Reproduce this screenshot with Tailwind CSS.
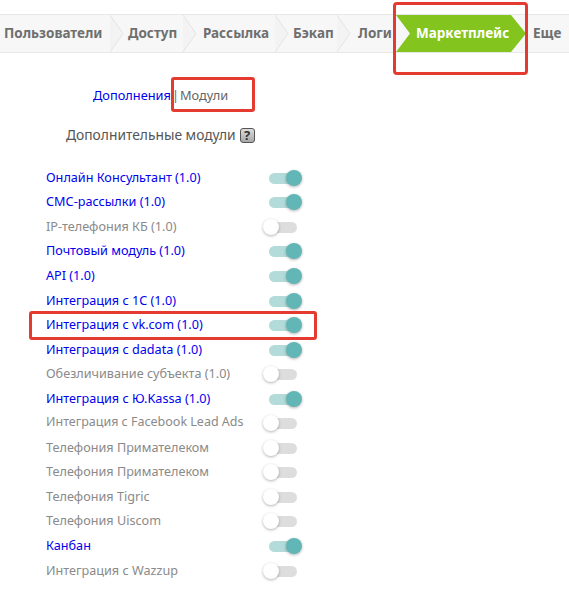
<!DOCTYPE html>
<html lang="ru"><head><meta charset="utf-8">
<script src="https://cdn.jsdelivr.net/npm/@tailwindcss/browser@4"></script>
</head>
<body class="bg-white">
<div class="relative w-[569px] h-[594px] overflow-hidden bg-white font-['Noto_Sans',sans-serif]">
  <div class="h-[14px]"></div>
  <nav class="h-[39px] bg-[#f7f7f7] border-y border-[#e8e8e8] flex items-center text-[13.5px] font-bold text-[#6f6f6f] whitespace-nowrap">
    <span class="ml-[4px] w-[106px]">Пользователи</span>
    <svg class="w-[14px] h-[37px] shrink-0" viewBox="0 0 14 37"><path d="M0 0L13 18.5L0 37" fill="#f3f3f3" stroke="#e4e4e4"/></svg>
    <span class="ml-[4px] w-[55px]">Доступ</span>
    <svg class="w-[14px] h-[37px] shrink-0" viewBox="0 0 14 37"><path d="M0 0L13 18.5L0 37" fill="#f3f3f3" stroke="#e4e4e4"/></svg>
    <span class="ml-[6px] w-[72px]">Рассылка</span>
    <svg class="w-[14px] h-[37px] shrink-0" viewBox="0 0 14 37"><path d="M0 0L13 18.5L0 37" fill="#f3f3f3" stroke="#e4e4e4"/></svg>
    <span class="ml-[4px] w-[44px]">Бэкап</span>
    <svg class="w-[14px] h-[37px] shrink-0" viewBox="0 0 14 37"><path d="M0 0L13 18.5L0 37" fill="#f3f3f3" stroke="#e4e4e4"/></svg>
    <span class="ml-[7px] w-[38px]">Логи</span>
    <div class="relative w-[131px] h-[37px] shrink-0">
      <svg class="absolute inset-0" width="131" height="37" viewBox="0 0 131 37"><path d="M0 0H115L130 18.5L115 37H0L14 18.5Z" fill="#84c41e"/></svg>
      <span class="absolute left-[20px] top-[8px] text-white text-[13.5px] leading-[20px]">Маркетплейс</span>
    </div>
    <span class="ml-[6px]">Еще</span>
  </nav>

  <div class="pl-[93px] pt-[33px] text-[12.8px] leading-[18px] text-[#666] flex"><a class="text-[#0000ee]">Дополнения</a><span class="ml-[1px]">|</span><span class="ml-[1px]">Модули</span></div>
  <div class="pl-[66px] mt-[22px] flex items-center gap-[4px] text-[13.8px] leading-[18px] text-[#555]">Дополнительные модули
    <span class="w-[15px] h-[15px] rounded-[3px] bg-gradient-to-b from-[#dddddd] to-[#a8a8a8] border border-[#555] flex items-center justify-center text-[13px] font-bold text-[#333] leading-none">?</span>
  </div>

  <ul class="absolute left-[46px] top-[165px] w-[260px] text-[12.65px] text-[#0000ee]">
    <li class="h-[24.56px] flex items-center justify-between">Онлайн Консультант (1.0)<span class="relative top-[1px] block w-[28px] h-[11px] mr-[9px] rounded-full bg-[#b2dbd9]"><i class="absolute -top-[3px] left-[17px] w-[16px] h-[16px] rounded-full bg-[#62b7b6] shadow-[0_1px_3px_rgba(0,0,0,.3)]"></i></span></li>
    <li class="h-[24.56px] flex items-center justify-between">СМС-рассылки (1.0)<span class="relative top-[1px] block w-[28px] h-[11px] mr-[9px] rounded-full bg-[#b2dbd9]"><i class="absolute -top-[3px] left-[17px] w-[16px] h-[16px] rounded-full bg-[#62b7b6] shadow-[0_1px_3px_rgba(0,0,0,.3)]"></i></span></li>
    <li class="h-[24.56px] flex items-center justify-between text-[#8a8a8a]">IP-телефония КБ (1.0)<span class="relative top-[1px] block w-[28px] h-[11px] mr-[9px] rounded-full bg-[#dddddd]"><i class="absolute -top-[3px] -left-[6px] w-[16px] h-[16px] rounded-full bg-white shadow-[0_1px_3px_rgba(0,0,0,.3)]"></i></span></li>
    <li class="h-[24.56px] flex items-center justify-between">Почтовый модуль (1.0)<span class="relative top-[1px] block w-[28px] h-[11px] mr-[9px] rounded-full bg-[#b2dbd9]"><i class="absolute -top-[3px] left-[17px] w-[16px] h-[16px] rounded-full bg-[#62b7b6] shadow-[0_1px_3px_rgba(0,0,0,.3)]"></i></span></li>
    <li class="h-[24.56px] flex items-center justify-between">API (1.0)<span class="relative top-[1px] block w-[28px] h-[11px] mr-[9px] rounded-full bg-[#b2dbd9]"><i class="absolute -top-[3px] left-[17px] w-[16px] h-[16px] rounded-full bg-[#62b7b6] shadow-[0_1px_3px_rgba(0,0,0,.3)]"></i></span></li>
    <li class="h-[24.56px] flex items-center justify-between">Интеграция с 1С (1.0)<span class="relative top-[1px] block w-[28px] h-[11px] mr-[9px] rounded-full bg-[#b2dbd9]"><i class="absolute -top-[3px] left-[17px] w-[16px] h-[16px] rounded-full bg-[#62b7b6] shadow-[0_1px_3px_rgba(0,0,0,.3)]"></i></span></li>
    <li class="h-[24.56px] flex items-center justify-between">Интеграция с vk.com (1.0)<span class="relative top-[1px] block w-[28px] h-[11px] mr-[9px] rounded-full bg-[#b2dbd9]"><i class="absolute -top-[3px] left-[17px] w-[16px] h-[16px] rounded-full bg-[#62b7b6] shadow-[0_1px_3px_rgba(0,0,0,.3)]"></i></span></li>
    <li class="h-[24.56px] flex items-center justify-between">Интеграция с dadata (1.0)<span class="relative top-[1px] block w-[28px] h-[11px] mr-[9px] rounded-full bg-[#b2dbd9]"><i class="absolute -top-[3px] left-[17px] w-[16px] h-[16px] rounded-full bg-[#62b7b6] shadow-[0_1px_3px_rgba(0,0,0,.3)]"></i></span></li>
    <li class="h-[24.56px] flex items-center justify-between text-[#8a8a8a]">Обезличивание субъекта (1.0)<span class="relative top-[1px] block w-[28px] h-[11px] mr-[9px] rounded-full bg-[#dddddd]"><i class="absolute -top-[3px] -left-[6px] w-[16px] h-[16px] rounded-full bg-white shadow-[0_1px_3px_rgba(0,0,0,.3)]"></i></span></li>
    <li class="h-[24.56px] flex items-center justify-between">Интеграция с Ю.Kassa (1.0)<span class="relative top-[1px] block w-[28px] h-[11px] mr-[9px] rounded-full bg-[#b2dbd9]"><i class="absolute -top-[3px] left-[17px] w-[16px] h-[16px] rounded-full bg-[#62b7b6] shadow-[0_1px_3px_rgba(0,0,0,.3)]"></i></span></li>
    <li class="h-[24.56px] flex items-center justify-between text-[#8a8a8a]"><span class="text-[12.5px]">Интеграция с Facebook Lead Ads</span><span class="relative top-[1px] block w-[28px] h-[11px] mr-[9px] rounded-full bg-[#dddddd]"><i class="absolute -top-[3px] -left-[6px] w-[16px] h-[16px] rounded-full bg-white shadow-[0_1px_3px_rgba(0,0,0,.3)]"></i></span></li>
    <li class="h-[24.56px] flex items-center justify-between text-[#8a8a8a]">Телефония Примателеком<span class="relative top-[1px] block w-[28px] h-[11px] mr-[9px] rounded-full bg-[#dddddd]"><i class="absolute -top-[3px] -left-[6px] w-[16px] h-[16px] rounded-full bg-white shadow-[0_1px_3px_rgba(0,0,0,.3)]"></i></span></li>
    <li class="h-[24.56px] flex items-center justify-between text-[#8a8a8a]">Телефония Примателеком<span class="relative top-[1px] block w-[28px] h-[11px] mr-[9px] rounded-full bg-[#dddddd]"><i class="absolute -top-[3px] -left-[6px] w-[16px] h-[16px] rounded-full bg-white shadow-[0_1px_3px_rgba(0,0,0,.3)]"></i></span></li>
    <li class="h-[24.56px] flex items-center justify-between text-[#8a8a8a]">Телефония Tigric<span class="relative top-[1px] block w-[28px] h-[11px] mr-[9px] rounded-full bg-[#dddddd]"><i class="absolute -top-[3px] -left-[6px] w-[16px] h-[16px] rounded-full bg-white shadow-[0_1px_3px_rgba(0,0,0,.3)]"></i></span></li>
    <li class="h-[24.56px] flex items-center justify-between text-[#8a8a8a]">Телефония Uiscom<span class="relative top-[1px] block w-[28px] h-[11px] mr-[9px] rounded-full bg-[#dddddd]"><i class="absolute -top-[3px] -left-[6px] w-[16px] h-[16px] rounded-full bg-white shadow-[0_1px_3px_rgba(0,0,0,.3)]"></i></span></li>
    <li class="h-[24.56px] flex items-center justify-between">Канбан<span class="relative top-[1px] block w-[28px] h-[11px] mr-[9px] rounded-full bg-[#b2dbd9]"><i class="absolute -top-[3px] left-[17px] w-[16px] h-[16px] rounded-full bg-[#62b7b6] shadow-[0_1px_3px_rgba(0,0,0,.3)]"></i></span></li>
    <li class="h-[24.56px] flex items-center justify-between text-[#8a8a8a]">Интеграция с Wazzup<span class="relative top-[1px] block w-[28px] h-[11px] mr-[9px] rounded-full bg-[#dddddd]"><i class="absolute -top-[3px] -left-[6px] w-[16px] h-[16px] rounded-full bg-white shadow-[0_1px_3px_rgba(0,0,0,.3)]"></i></span></li>
  </ul>

  <div class="absolute left-[393px] top-[2px] w-[135px] h-[73px] border-[3px] border-[#e53a2f] rounded-[4px]"></div>
  <div class="absolute left-[171px] top-[77px] w-[84px] h-[35px] border-[3px] border-[#e53a2f] rounded-[3px]"></div>
  <div class="absolute left-[29px] top-[311px] w-[288px] h-[29px] border-[3px] border-[#e53a2f] rounded-[3px]"></div>
</div>
</body></html>
